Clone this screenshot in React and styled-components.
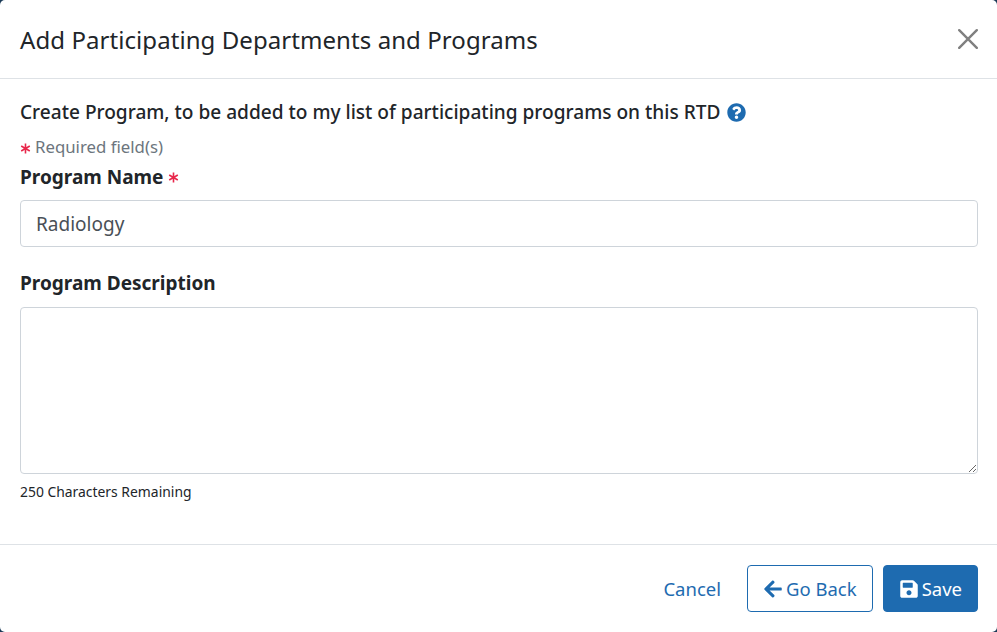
import React from 'react';
import styled, { createGlobalStyle } from 'styled-components';
import { FaArrowLeft, FaQuestionCircle, FaSave } from 'react-icons/fa';

const GlobalStyle = createGlobalStyle`
  html, body {
    margin: 0;
    padding: 0;
    background: #1b3a57;
  }
  body {
    font-family: "Noto Sans", "Open Sans", sans-serif;
    color: #212529;
  }
`;

const Modal = styled.div`
  width: 997px;
  height: 632px;
  background: #fff;
  border-radius: 5px;
  display: flex;
  flex-direction: column;
  overflow: hidden;
`;

const Header = styled.div`
  height: 79px;
  flex: none;
  box-sizing: border-box;
  padding: 0 19px 0 20px;
  display: flex;
  align-items: center;
  justify-content: space-between;
  border-bottom: 1px solid #dee2e6;
`;

const Title = styled.h5`
  margin: 0;
  font-size: 24px;
  font-weight: 400;
  line-height: 36px;
  letter-spacing: 0.07px;
  padding-top: 2px;
`;

const CloseButton = styled.button`
  border: 0;
  background: none;
  padding: 0;
  width: 20px;
  height: 20px;
  display: flex;
  color: #808080;
`;

const Body = styled.div`
  flex: 1;
  padding: 19px 19px 0 20px;
  display: flex;
  flex-direction: column;
`;

const Intro = styled.div`
  font-size: 19.08px;
  font-weight: 500;
  line-height: 28px;
  display: flex;
  align-items: center;
  gap: 7px;
  svg {
    color: #1e6bb0;
    font-size: 19px;
  }
`;

const RequiredNote = styled.div`
  margin-top: 8px;
  font-size: 16.8px;
  line-height: 25px;
  color: #6c757d;
  display: flex;
  align-items: center;
  gap: 4px;
`;

const Star = styled.svg.attrs({ viewBox: '0 0 11 11', width: 11, height: 11 })`
  flex: none;
  fill: none;
  stroke: #e8274b;
  stroke-width: 1.6;
  margin-top: ${(props) => props.$drop}px;
`;

const Label = styled.label`
  display: flex;
  align-items: center;
  gap: 5px;
  margin-top: ${(props) => props.$top || 0}px;
  font-size: 19px;
  font-weight: 700;
  line-height: 28px;
`;

const TextInput = styled.input`
  display: block;
  box-sizing: border-box;
  width: 100%;
  height: 47px;
  margin: 9px 0 22px;
  padding: 0 15px;
  border: 1px solid #ced4da;
  border-radius: 4px;
  font: inherit;
  font-size: 19px;
  color: #495057;
`;

const TextArea = styled.textarea`
  display: block;
  box-sizing: border-box;
  width: 100%;
  height: 167px;
  margin: 10px 0 0;
  padding: 8px 15px;
  border: 1px solid #ced4da;
  border-radius: 4px;
  font: inherit;
  font-size: 19px;
`;

const Hint = styled.small`
  display: block;
  margin-top: 7px;
  font-size: 13.9px;
  line-height: 21px;
`;

const Footer = styled.div`
  height: 88px;
  flex: none;
  box-sizing: border-box;
  padding: 0 19px 0 20px;
  border-top: 1px solid #dee2e6;
  display: flex;
  align-items: center;
  justify-content: flex-end;
  gap: 10px;
`;

const Button = styled.button`
  box-sizing: border-box;
  height: 47px;
  padding: 0 15px;
  border-radius: 4px;
  border: 1px solid ${(props) => (props.$variant === 'link' ? 'transparent' : '#1e6bb0')};
  background: ${(props) => (props.$variant === 'primary' ? '#1e6bb0' : '#fff')};
  color: ${(props) => (props.$variant === 'primary' ? '#fff' : '#1e6bb0')};
  font: inherit;
  font-size: 18.5px;
  display: flex;
  align-items: center;
  gap: 3px;
  svg {
    font-size: 20px;
  }
`;

const Asterisk = ({ drop }) => (
  <Star $drop={drop}>
    <path d="M5.5 0.5V10.5M1.2 3 9.8 8M9.8 3 1.2 8" />
  </Star>
);

const App = () => {
  return (
    <>
      <GlobalStyle />
      <Modal>
        <Header>
          <Title>Add Participating Departments and Programs</Title>
          <CloseButton aria-label="Close">
            <svg width="20" height="20" viewBox="0 0 20 20" fill="none" stroke="currentColor" strokeWidth="2.4" strokeLinecap="round">
              <path d="M1.2 1.2 18.8 18.8M18.8 1.2 1.2 18.8" />
            </svg>
          </CloseButton>
        </Header>
        <Body>
          <Intro>
            Create Program, to be added to my list of participating programs on this RTD
            <FaQuestionCircle />
          </Intro>
          <RequiredNote>
            <Asterisk drop={3} />
            Required field(s)
          </RequiredNote>
          <Label htmlFor="program-name" $top={4}>
            Program Name
            <Asterisk drop={0} />
          </Label>
          <TextInput id="program-name" defaultValue="Radiology" />
          <Label htmlFor="program-description">Program Description</Label>
          <TextArea id="program-description" />
          <Hint>250 Characters Remaining</Hint>
        </Body>
        <Footer>
          <Button $variant="link">Cancel</Button>
          <Button $variant="outline">
            <FaArrowLeft />
            Go Back
          </Button>
          <Button $variant="primary">
            <FaSave />
            Save
          </Button>
        </Footer>
      </Modal>
    </>
  );
};

export default App;
